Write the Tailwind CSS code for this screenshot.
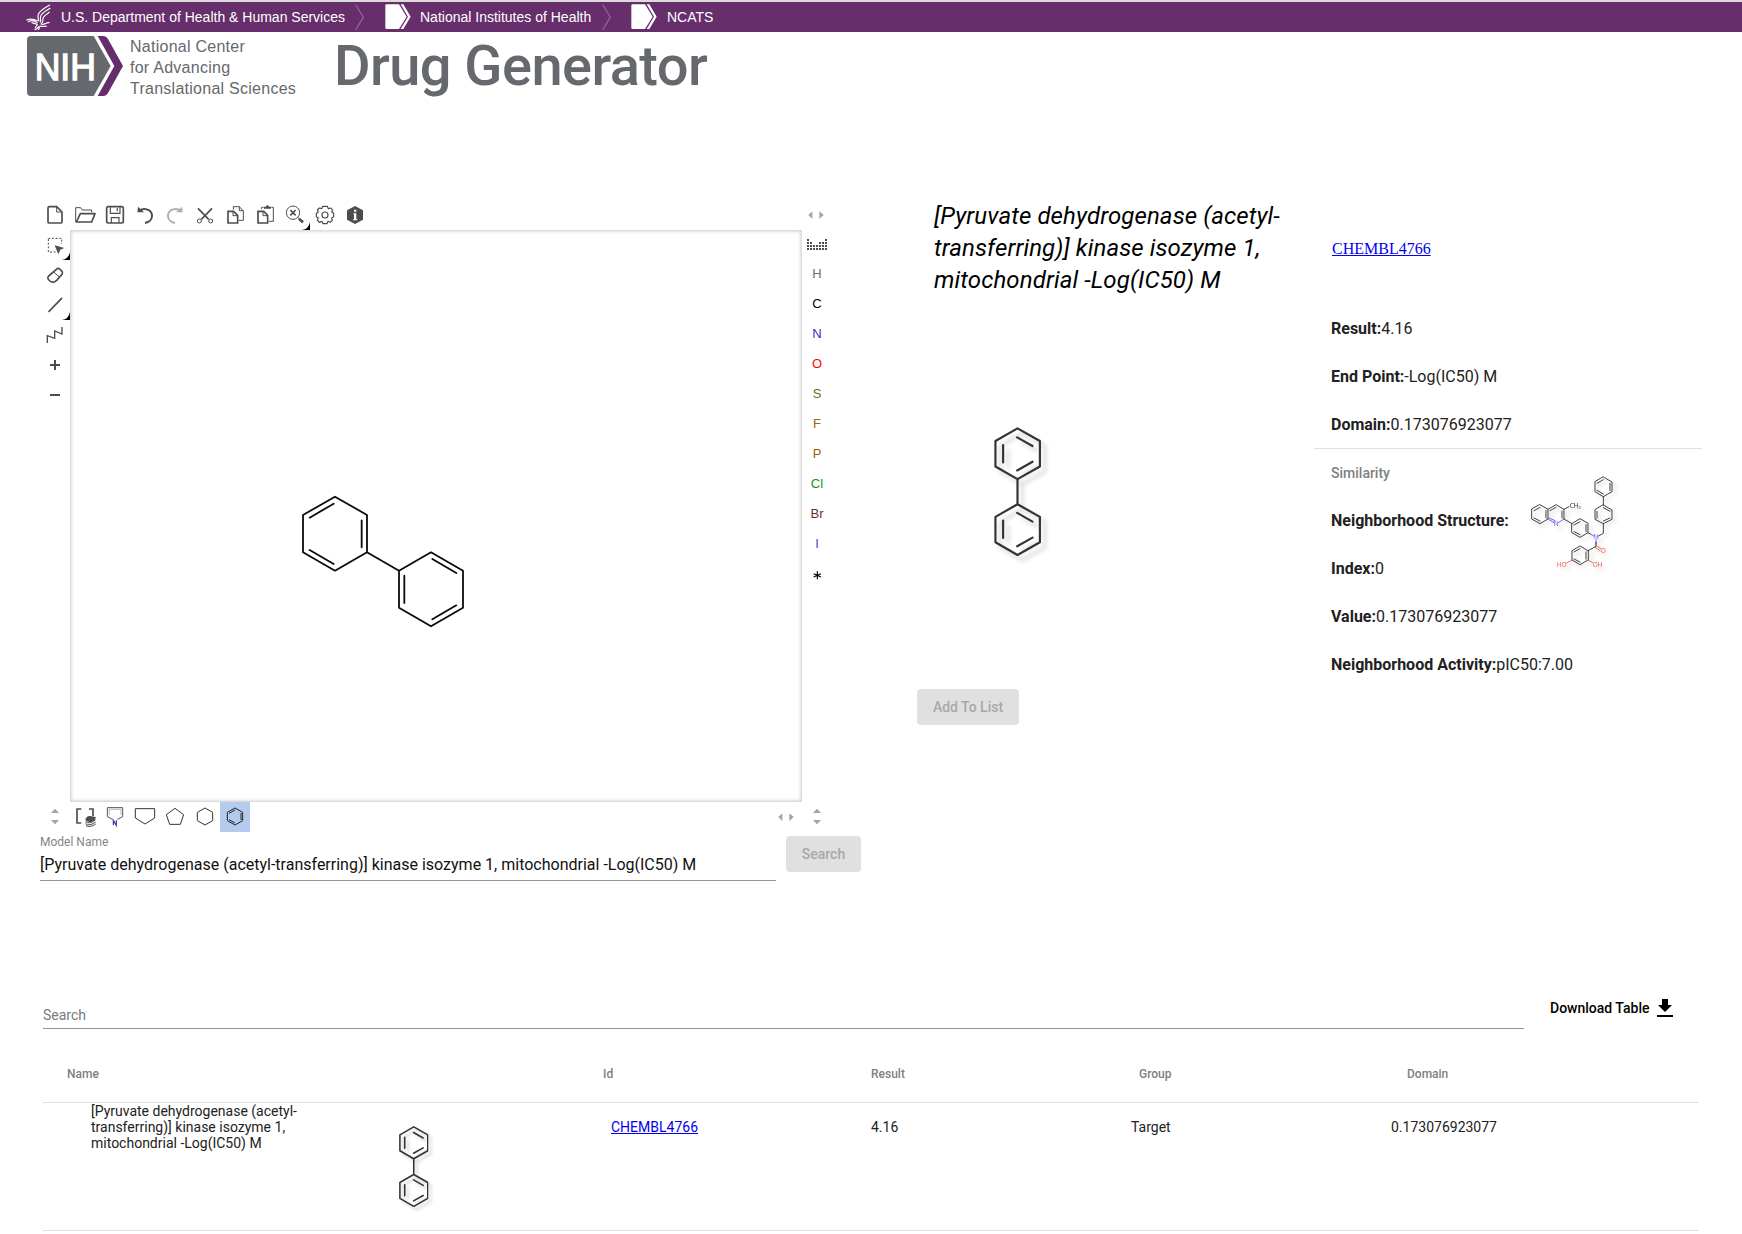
<!DOCTYPE html>
<html lang="en">
<head>
<meta charset="utf-8">
<title>Drug Generator</title>
<script src="https://cdn.jsdelivr.net/npm/@tailwindcss/browser@4"></script>
</head>
<body class="bg-white">
<svg class="hidden">
  <defs>
    <symbol id="chevron" viewBox="0 0 30 80"><path d="M2 1 L25 39 L2 77" fill="none" stroke="#8d6394" stroke-width="4"/></symbol>
    <symbol id="tag" viewBox="0 0 78 78"><path d="M4 1 H42 L65 38 L42 75 H4 Q1 75 1 71 V5 Q1 1 4 1Z M47 1 H55 L77 38 L55 75 H47 L69 38Z" fill="#fff"/></symbol>
    <symbol id="corner" viewBox="0 0 24 24"><path d="M24 0 V24 H0 Q20 21 24 0Z" fill="#000"/></symbol>
    <symbol id="biphenyl" viewBox="0 0 140 386">
      <g fill="none" stroke="#333" stroke-linecap="round" stroke-linejoin="round">
        <path d="M70 4 L137 42 V118 L70 156 L4 118 V42Z M70 156 V231 M70 231 L137 269 V345 L70 383 L4 345 V269Z"/>
        <path d="M69 31 L115 57 M27 54 V106 M69 130 L115 104 M69 257 L115 283 M27 280 V332 M69 357 L115 331"/>
      </g>
    </symbol>
    <symbol id="leftright" viewBox="0 0 90 90"><path d="M34 34 V57 L22 45Z M55 34 V57 L68 45Z" fill="#a3a3a3"/></symbol>
    <symbol id="updown" viewBox="0 0 90 90"><path d="M45 20 L57 33 H33Z M33 54 H57 L45 67Z" fill="#a3a3a3"/></symbol>
  </defs>
</svg>
<div class="flex h-[1234px] w-[1742px] flex-col overflow-hidden bg-white font-[Roboto,sans-serif]">

  <!-- agency bar -->
  <header class="flex h-8 shrink-0 items-center border-t-2 border-[#dcdcdc] bg-[#662e6b] font-['Liberation_Sans',Arial,sans-serif] text-[14px] whitespace-nowrap text-white">
    <svg class="ml-[26px] h-[27px] w-[26px]" viewBox="0 0 78 81" fill="none" stroke="#fff" stroke-width="3.5" stroke-linecap="round">
      <path d="M71 3 C58 11 43 17 37 31 C34 40 38 45 38 50 M72 13 C60 21 47 26 44 37 C42 43 45 49 43 54 M70 25 C61 31 53 35 51 43 C50 49 52 54 47 58"/>
      <path d="M2 48 C14 43 25 45 35 51 M7 53 C17 48 27 51 33 56 M18 56 L34 61 L28 72 M45 60 C53 65 61 55 69 56 M42 66 C50 70 56 65 61 67 M38 68 C34 73 32 76 27 77 M40 69 L38 77" />
    </svg>
    <span class="ml-[9px] w-[294px]">U.S. Department of Health &amp; Human Services</span>
    <svg class="h-[27px] w-[10px]"><use href="#chevron"/></svg>
    <svg class="ml-[20px] h-[26px] w-[26px]"><use href="#tag"/></svg>
    <span class="ml-[9px] w-[182px]">National Institutes of Health</span>
    <svg class="h-[27px] w-[10px]"><use href="#chevron"/></svg>
    <svg class="ml-[19px] h-[26px] w-[26px]"><use href="#tag"/></svg>
    <span class="ml-[10px]">NCATS</span>
  </header>

  <!-- brand -->
  <div class="flex h-[168px] shrink-0 items-start pl-[27px] text-[#65686d]">
    <svg class="mt-1 h-[60px] w-[96px]" viewBox="0 0 288 180">
      <path d="M12 0 H200 L251 90 L200 180 H12 Q0 180 0 168 V12 Q0 0 12 0Z" fill="#65686c"/>
      <path d="M212 0 H228 Q238 0 243 9 L288 90 L243 171 Q238 180 228 180 H212 L262 90Z" fill="#652d6a"/>
      <text x="23" y="131" textLength="184" lengthAdjust="spacingAndGlyphs" font-family="Liberation Sans" font-size="112" fill="#fff" stroke="#fff" stroke-width="4">NIH</text>
    </svg>
    <div class="mt-[4px] ml-[7px] w-[170px] font-['Liberation_Sans',Arial,sans-serif] text-[16px] leading-[21px] tracking-[0.26px] whitespace-nowrap">National Center<br>for Advancing<br>Translational Sciences</div>
    <h1 class="mt-px ml-[34px] text-[56px] leading-[66px] font-medium tracking-[-0.56px]">Drug Generator</h1>
  </div>

  <main class="flex h-[700px] shrink-0 pl-[40px]">
    <!-- sketcher -->
    <section class="w-[821px]">
      <div class="flex h-[30px] w-[792px] text-[#4d4d4d]">
        <svg class="size-[30px]" viewBox="0 0 90 90" fill="none" stroke="currentColor" stroke-width="5"><path d="M28 20 H50 L66 36 V66 Q66 69 63 69 H28 Q24 69 24 65 V24 Q24 20 28 20Z"/><path d="M50 20 V36 H66" stroke-width="3"/></svg>
        <svg class="size-[30px]" viewBox="0 0 90 90" fill="none" stroke="currentColor" stroke-width="5" stroke-linejoin="round"><path d="M17 66 V23 H32 L37 30 H65 V37" stroke-width="3"/><path d="M31 41 H75 L65 66 H19Z"/></svg>
        <svg class="size-[30px]" viewBox="0 0 90 90" fill="none" stroke="currentColor" stroke-width="5"><path d="M25 20 H65 Q70 20 70 25 V64 Q70 69 65 69 H25 Q20 69 20 64 V25 Q20 20 25 20Z"/><path d="M31 20 V40 H60 V20 M34 69 V53 H57 V69 M52 24 V34" stroke-width="3.5"/></svg>
        <svg class="size-[30px]" viewBox="0 0 90 90" fill="none" stroke="currentColor" stroke-width="6"><path d="M27 33 C40 23 63 26 66 45 C67 58 58 67 45 69"/><path d="M24 20 L22 37 H42Z" fill="currentColor" stroke="none"/></svg>
        <svg class="size-[30px] text-[#b0b0b0]" viewBox="0 0 90 90" fill="none" stroke="currentColor" stroke-width="6"><path d="M63 33 C50 23 27 26 24 45 C23 58 32 67 45 69"/><path d="M66 20 L68 37 H48Z" fill="currentColor" stroke="none"/></svg>
        <svg class="size-[30px]" viewBox="0 0 90 90" fill="none" stroke="currentColor" stroke-width="3"><path d="M24 25 L56 58 M66 25 L34 58" stroke-width="5"/><circle cx="28" cy="63" r="6"/><circle cx="62" cy="63" r="6"/></svg>
        <svg class="size-[30px]" viewBox="0 0 90 90" fill="none" stroke="currentColor" stroke-width="5"><path d="M24 34 H41 L53 46 V69 H24Z"/><path d="M39 34 V47 H53 M40 29 V20 H58 L70 33 V61 H57 M58 20 V32 H70" stroke-width="3"/></svg>
        <svg class="size-[30px]" viewBox="0 0 90 90" fill="none" stroke="currentColor" stroke-width="5"><path d="M24 34 H41 L53 46 V69 H24Z"/><path d="M39 34 V47 H53 M35 27 V22 H41 M64 22 H70 V64 H57" stroke-width="3"/><path d="M42 26 V20 H47 Q52 12 58 20 H63 V26Z" fill="currentColor" stroke="none"/></svg>
        <div class="relative size-[30px]">
          <svg class="size-[30px]" viewBox="0 0 90 90" fill="none" stroke="currentColor"><circle cx="39" cy="38" r="20" stroke-width="3"/><path d="M31 30 L47 46 M47 30 L31 46" stroke-width="5"/><path d="M53 52 L59 57" stroke-width="3"/><path d="M57 56 L69 67" stroke-width="8"/></svg>
          <svg class="absolute right-0 bottom-0 size-2"><use href="#corner"/></svg>
        </div>
        <svg class="size-[30px]" viewBox="0 0 90 90" fill="none" stroke="currentColor" stroke-width="3.5" stroke-linejoin="round"><path d="M38 19 H52 L55 26 L63 24 L68 31 L65 36 L71 40 V50 L65 54 L67 60 L61 67 L54 64 L51 71 H39 L36 64 L28 67 L22 60 L25 54 L19 50 V40 L25 36 L22 30 L28 24 L35 26Z"/><circle cx="45" cy="45" r="9"/></svg>
        <svg class="size-[30px]" viewBox="0 0 90 90"><path d="M45 18 L69 31 V59 L45 72 L21 59 V31Z" fill="currentColor"/><path d="M42 29 H49 V35 H42Z M40 40 H49 V58 H52 V61 H39 V58 H42 V43 H40Z" fill="#fff"/></svg>
        <svg class="mr-[1.5px] ml-auto size-[30px]"><use href="#leftright"/></svg>
      </div>
      <div class="flex h-[572px]">
        <div class="flex w-[30px] flex-col text-[#4d4d4d]">
          <div class="relative size-[30px]">
            <svg class="size-[30px]" viewBox="0 0 90 90"><path d="M25 25 H65 V66 H25Z" fill="none" stroke="currentColor" stroke-width="3" stroke-dasharray="6 5"/><path d="M42 42 H80 V80 H50Z" fill="#fff"/><path d="M44 46 L73 54 L61 59 L55 73Z" fill="currentColor"/></svg>
            <svg class="absolute right-0 bottom-0 size-2"><use href="#corner"/></svg>
          </div>
          <svg class="size-[30px]" viewBox="0 0 90 90" fill="none" stroke="currentColor" stroke-width="5" stroke-linejoin="round"><path d="M49 28 Q54 23 59 27 L66 34 Q69 38 66 43 L50 61 Q40 70 31 64 Q19 55 26 48Z"/><path d="M40 35 L58 51" stroke-width="3"/></svg>
          <div class="relative size-[30px]">
            <svg class="size-[30px]" viewBox="0 0 90 90"><path d="M27 64 L65 25" stroke="currentColor" stroke-width="5" stroke-linecap="round"/></svg>
            <svg class="absolute right-0 bottom-0 size-2"><use href="#corner"/></svg>
          </div>
          <svg class="size-[30px]" viewBox="0 0 90 90" fill="none" stroke="currentColor" stroke-width="4"><path d="M22 69 V47 L44 55 V33 L66 42 V21"/></svg>
          <svg class="size-[30px]" viewBox="0 0 90 90"><path d="M45 30 V60 M30 45 H60" stroke="currentColor" stroke-width="6"/></svg>
          <svg class="size-[30px]" viewBox="0 0 90 90"><path d="M30 45 H60" stroke="currentColor" stroke-width="6"/></svg>
        </div>
        <div class="h-[572px] w-[732px] border border-[#dcdcdc] shadow-[inset_0_0_3px_1px_#dcdcdc]">
          <svg class="mt-[239px] ml-[209px] h-[180px] w-[220px]" viewBox="0 0 660 540" fill="none" stroke="#0a0a0a" stroke-width="5.4" stroke-linecap="round" stroke-linejoin="round">
            <path d="M165 80 L261 135 V247 L165 302 L69 247 V135Z M261 247 L357 302 M453 247 L549 302 V413 L453 469 L357 413 V302Z"/>
            <path d="M161 101 L89 143 M245 151 V232 M161 282 L89 240 M457 267 L529 309 M373 317 V399 M457 448 L529 406"/>
          </svg>
        </div>
        <div class="flex w-[30px] flex-col text-center font-['Liberation_Sans',Arial,sans-serif] text-[13px] leading-[30px]">
          <svg class="h-[29px] w-[30px]" viewBox="0 0 90 87"><path d="M15 30 H21 M69 30 H75 M15 39 H30 M51 39 H75 M15 48 H75 M15 57 H75" stroke="#4d4d4d" stroke-width="6" stroke-dasharray="6 3"/></svg>
          <span class="text-[#6e6e6e]">H</span>
          <span class="text-black">C</span>
          <span class="text-[#3030c0]">N</span>
          <span class="text-[#f00]">O</span>
          <span class="text-[#6b6e12]">S</span>
          <span class="text-[#996515]">F</span>
          <span class="text-[#996000]">P</span>
          <span class="text-[#0a9a0a]">Cl</span>
          <span class="text-[#663030]">Br</span>
          <span class="text-[#8035c5]">I</span>
          <svg class="size-[30px]" viewBox="0 0 90 90"><path d="M46 37 V61 M35 44 L57 54 M57 44 L35 54" stroke="#000" stroke-width="3.5"/></svg>
        </div>
      </div>
      <div class="flex h-[30px] w-[792px] text-[#333]">
        <svg class="size-[30px]"><use href="#updown"/></svg>
        <svg class="size-[30px]" viewBox="0 0 90 90" fill="none" stroke="#4d4d4d" stroke-width="5"><path d="M34 21 H21 V63 H34 M57 21 H69 V42"/><path d="M46 52 Q50 41 60 42 L77 45 Q78 55 66 59 Q48 62 46 52Z" fill="#4d4d4d" stroke="none"/><path d="M46 59 Q58 68 76 54 M46 65 Q58 74 77 60 M48 71 Q60 78 77 66" stroke-width="3"/></svg>
        <svg class="size-[30px]" viewBox="0 0 90 90" fill="none" stroke="#333" stroke-width="2.5"><path d="M38 52 L22 44 V17 H68 V44 L52 52"/><path d="M28 39 V22 H63 V39" stroke="#aaa"/><path d="M40 70 V55 L49 70 V55" stroke="#3838a8" stroke-width="3.5"/></svg>
        <svg class="size-[30px]" viewBox="0 0 90 90" fill="none" stroke="#333" stroke-width="3"><path d="M16 20 H74 V48 L45 66 L16 48Z"/></svg>
        <svg class="size-[30px]" viewBox="0 0 90 90" fill="none" stroke="#333" stroke-width="3"><path d="M45 19 L71 38 L61 67 H29 L19 38Z"/></svg>
        <svg class="size-[30px]" viewBox="0 0 90 90" fill="none" stroke="#333" stroke-width="3"><path d="M45 18 L68 31 V56 L45 69 L22 56 V31Z"/></svg>
        <svg class="size-[30px] bg-[#b5cbee]" viewBox="0 0 90 90" fill="none" stroke="#222" stroke-width="3"><path d="M45 18 L68 31 V56 L45 69 L22 56 V31Z M27 34 L45 24 M63 33 V54 M27 53 L45 63"/></svg>
        <svg class="mr-[1.5px] ml-auto size-[30px]"><use href="#leftright"/></svg>
        <svg class="size-[30px]"><use href="#updown"/></svg>
      </div>
      <div class="flex">
        <label class="flex h-[49px] w-[736px] flex-col border-b border-[#949494]">
          <span class="mt-[2px] text-[12px] leading-[16px] text-[#858585]">Model Name</span>
          <span class="mt-[5px] text-[16px] leading-[20px] text-[#111]">[Pyruvate dehydrogenase (acetyl-transferring)] kinase isozyme 1, mitochondrial -Log(IC50) M</span>
        </label>
        <button class="mt-1 ml-[10px] h-9 w-[75px] rounded bg-[#e0e0e0] text-[14px] font-medium text-[#a8a8a8]">Search</button>
      </div>
    </section>

    <!-- prediction -->
    <section class="ml-[56px] flex w-[397px] flex-col items-start">
      <h2 class="ml-[17px] w-[370px] text-[24px] leading-[32px] tracking-[0.1px] text-black italic">[Pyruvate dehydrogenase (acetyl-transferring)] kinase isozyme 1, mitochondrial -Log(IC50) M</h2>
      <svg class="mt-[131px] ml-[76.5px] h-[129px] w-[47px] overflow-visible drop-shadow-[5px_5px_2px_rgba(0,0,0,0.2)]" stroke-width="6.5"><use href="#biphenyl"/></svg>
      <button class="mt-[133px] h-9 w-[102px] rounded bg-[#e0e0e0] text-[14px] font-medium text-[#a8a8a8]">Add To List</button>
    </section>

    <section class="w-[388px] text-[16px] text-[#212121]">
      <div class="flex h-[105px] items-center pb-[8px] pl-[18px]"><a class="font-['Liberation_Serif',serif] text-[#00e] underline" href="#">CHEMBL4766</a></div>
      <div class="h-[144px] border-b border-[#e0e0e0] pl-[17px] leading-[48px]">
        <p><b class="font-bold">Result:</b>4.16</p>
        <p><b class="font-bold">End Point:</b>-Log(IC50) M</p>
        <p><b class="font-bold">Domain:</b>0.173076923077</p>
      </div>
      <div class="pl-[17px] leading-[48px]">
        <h3 class="text-[14px] font-medium text-[#808080]">Similarity</h3>
        <div class="flex h-12 items-center">
          <b class="w-[196px] font-bold">Neighborhood Structure:</b>
          <svg class="mt-1 h-[100px] w-[93.33px] shrink-0 overflow-visible drop-shadow-[3px_3px_2px_rgba(0,0,0,0.18)]" viewBox="680 100 280 300" fill="none" stroke="#333" stroke-width="2.8" stroke-linecap="round" font-family="Noto Sans" font-size="19.5">
            <!-- terminal phenyl rings -->
            <path d="M909 112 L935 127 V156 L909 171 L884 156 V127Z M909 120 L890 131 M929 131 V153 M909 163 L890 152 M909 171 V196"/>
            <path d="M909 196 L935 211 V239 L909 252 L884 239 V211Z M909 204 L929 215 M890 215 V236 M909 244 L929 235 M909 252 V281 L893 290"/>
            <!-- quinoline -->
            <path d="M719 195 L743 209 V238 L719 252 L694 238 V209Z M719 203 L701 213 M737 213 V235 M719 244 L701 235 M743 209 L767 195 L791 209 V238 M767 203 L749 213 M785 214 V235 M791 209 L806 201 M791 238 L815 252"/>
            <path d="M743 238 L762 249 M791 238 L774 249 M747 235 L764 243" stroke="#6a5cff"/>
            <!-- linking phenyl -->
            <path d="M815 252 L839 237 L863 251 V279 L839 293 L815 279Z M839 246 L821 256 M857 255 V276 M839 285 L821 276 M863 279 L870 283"/>
            <path d="M870 283 L880 289 M887 300 V314" stroke="#6a5cff"/>
            <path d="M887 308 V320 L863 333"/>
            <path d="M887 318 L902 327 M884 323 L899 333" stroke="#f0604a"/>
            <path d="M863 333 L839 319 L815 333 V361 L839 375 L863 361Z M839 327 L821 337 M857 337 V358 M839 367 L821 358"/>
            <path d="M863 361 L877 369 M815 361 L799 370" stroke="#f0604a"/>
            <g stroke="none"><text x="808" y="205" fill="#333">CH<tspan font-size="12" dy="2">3</tspan></text><text x="760" y="259" fill="#6a5cff">N</text><text x="879" y="299" fill="#6a5cff">N</text><text x="901" y="341" fill="#f0604a">O</text><text x="769" y="383" fill="#f0604a">HO</text><text x="877" y="383" fill="#f0604a">OH</text></g>
          </svg>
        </div>
        <p><b class="font-bold">Index:</b>0</p>
        <p><b class="font-bold">Value:</b>0.173076923077</p>
        <p><b class="font-bold">Neighborhood Activity:</b>pIC50:7.00</p>
      </div>
    </section>
  </main>

  <!-- results -->
  <section class="ml-[43px] w-[1656px] shrink-0 pt-[84px]">
    <div class="flex">
      <div class="h-[45px] w-[1481px] border-b border-[#949494] pt-[21px] text-[14px] leading-[20px] text-[#7a7a7a]">Search</div>
      <div class="flex h-[48px] items-center gap-[4px] pl-[26px] text-[14px] font-medium text-black">Download Table
        <svg class="size-6" viewBox="0 0 24 24" fill="currentColor"><path d="M19 9h-4V3H9v6H5l7 7 7-7zM4 19v2h16v-2z"/></svg>
      </div>
    </div>
    <div class="mt-3 grid h-[59px] grid-cols-[536px_268px_268px_268px_268px] items-center border-b border-[#e0e0e0] pt-px pl-6 text-[12px] font-medium text-[#808080]">
      <span>Name</span><span>Id</span><span>Result</span><span>Group</span><span>Domain</span>
    </div>
    <div class="grid h-32 grid-cols-[308px_212px_260px_260px_260px_260px] border-b border-[#e0e0e0] pl-12 text-[14px] leading-[16px] text-[#212121]">
      <div class="w-[215px]">[Pyruvate dehydrogenase (acetyl-transferring)] kinase isozyme 1, mitochondrial -Log(IC50) M</div>
      <svg class="mt-[23px] h-[81px] w-[29.5px] overflow-visible drop-shadow-[3px_3px_1.5px_rgba(0,0,0,0.2)]" stroke-width="7.5"><use href="#biphenyl"/></svg>
      <a class="mt-4 text-[#00e] underline" href="#">CHEMBL4766</a>
      <span class="mt-4">4.16</span><span class="mt-4">Target</span><span class="mt-4">0.173076923077</span>
    </div>
  </section>
</div>
</body>
</html>
